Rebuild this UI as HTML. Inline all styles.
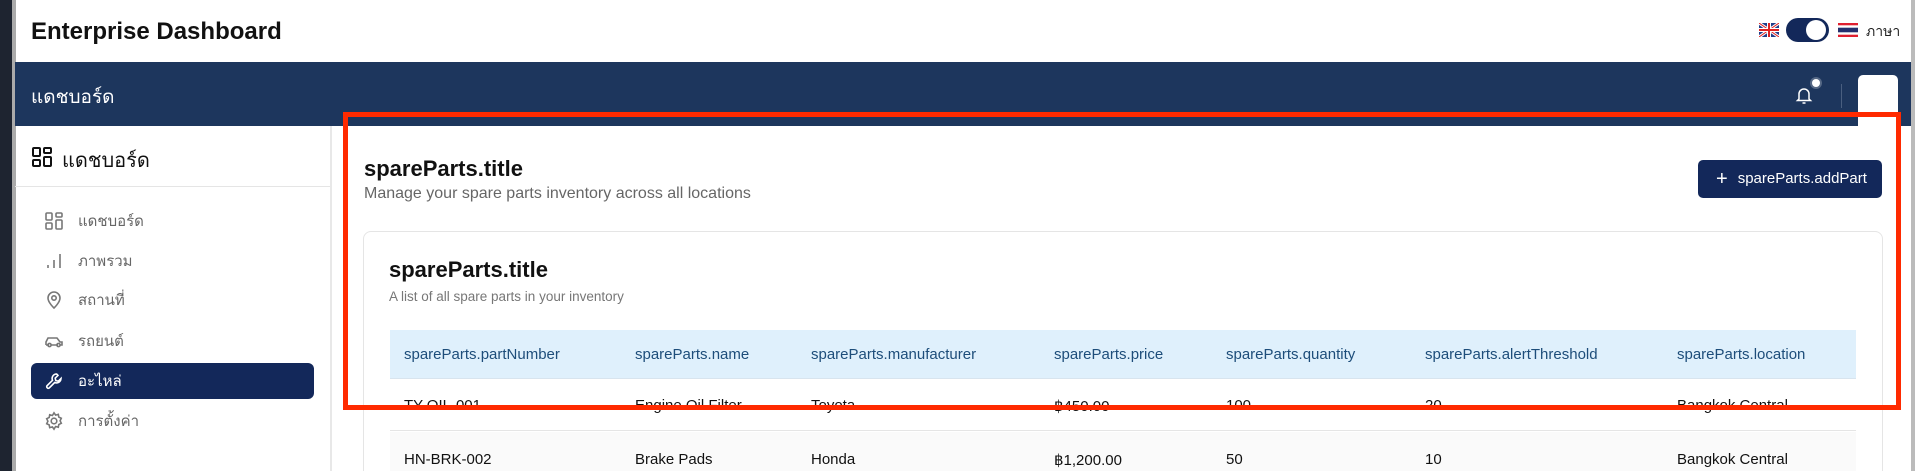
<!DOCTYPE html>
<html><head><meta charset="utf-8"><style>
*{box-sizing:border-box;margin:0;padding:0}
html,body{width:1915px;height:471px;overflow:hidden}
body{background:#fff;font-family:"Liberation Sans","Noto Sans CJK SC",sans-serif;position:relative}
.a{position:absolute}
.th{position:absolute;top:0;height:49px;line-height:49px;font-size:15px;color:#1d4d7a}
.td{position:absolute;font-size:15px;color:#111}
.mi{position:absolute;left:44px;font-size:15px;color:#666;display:flex;align-items:center;gap:14px;height:30px}
.mi svg{width:20px;height:20px;fill:none;stroke:#777;stroke-width:1.6}
</style></head><body>
<div class="a" style="left:0;top:0;width:15px;height:471px;background:#1e2430"></div>
<div class="a" style="left:12px;top:0;width:4px;height:471px;background:#aaa"></div>
<div class="a" style="left:1911px;top:0;width:4px;height:471px;background:#bbb"></div>
<div class="a" style="left:31px;top:18px;font-size:24px;font-weight:bold;color:#111">Enterprise Dashboard</div>
<svg class="a" style="left:1759px;top:23px" width="20" height="14" viewBox="0 0 20 14"><rect width="20" height="14" fill="#1f3d8a"/><path d="M0 0L20 14M20 0L0 14" stroke="#fff" stroke-width="3"/><path d="M0 0L20 14M20 0L0 14" stroke="#d22" stroke-width="1"/><path d="M10 0V14M0 7H20" stroke="#fff" stroke-width="4"/><path d="M10 0V14M0 7H20" stroke="#d22" stroke-width="2"/></svg>
<div class="a" style="left:1786px;top:18px;width:43px;height:24px;border-radius:12px;background:#13285a"><div class="a" style="left:20px;top:2px;width:20px;height:20px;border-radius:50%;background:#fff"></div></div>
<svg class="a" style="left:1838px;top:23px" width="20" height="14" viewBox="0 0 20 14"><rect width="20" height="14" fill="#e02030"/><rect y="2.3" width="20" height="9.4" fill="#fff"/><rect y="4.7" width="20" height="4.6" fill="#24306e"/></svg>
<div class="a" style="left:1866px;top:21px;font-size:14px;color:#222">ภาษา</div>
<div class="a" style="left:15px;top:62px;width:1896px;height:64px;background:#1d365d"></div>
<div class="a" style="left:31px;top:82px;font-size:19px;color:#fff">แดชบอร์ด</div>
<svg class="a" style="left:1795px;top:85px" width="18" height="20" viewBox="0 0 18 20" fill="none" stroke="#fff" stroke-width="1.5"><path d="M4 14V9a5 5 0 0110 0v5l1.5 1.5h-13z"/><path d="M7.5 18h3"/></svg>
<div class="a" style="left:1812px;top:79px;width:8px;height:8px;border-radius:50%;background:#fff;box-shadow:0 0 0 2px rgba(255,255,255,.25)"></div>
<div class="a" style="left:1841px;top:84px;width:1px;height:24px;background:#4a5f80"></div>
<div class="a" style="left:1858px;top:75px;width:40px;height:51px;border-radius:5px 5px 0 0;background:#fff"></div>
<div class="a" style="left:330px;top:126px;width:2px;height:345px;background:#e8e8e8"></div>
<div class="a" style="left:15px;top:186px;width:315px;height:1px;background:#e5e5e5"></div>
<svg class="a" style="left:32px;top:147px" width="20" height="20" viewBox="0 0 20 20" fill="none" stroke="#111" stroke-width="2"><rect x="1" y="1" width="7" height="8" rx="1"/><rect x="12" y="1" width="7" height="5" rx="1"/><rect x="12" y="10" width="7" height="9" rx="1"/><rect x="1" y="13" width="7" height="6" rx="1"/></svg>
<div class="a" style="left:62px;top:144px;font-size:20px;color:#111">แดชบอร์ด</div>
<div class="mi" style="top:206px"><svg viewBox="0 0 20 20"><rect x="2" y="2" width="6" height="7" rx="1"/><rect x="12" y="2" width="6" height="4" rx="1"/><rect x="12" y="9" width="6" height="9" rx="1"/><rect x="2" y="12" width="6" height="6" rx="1"/></svg>แดชบอร์ด</div>
<div class="mi" style="top:246px"><svg viewBox="0 0 20 20"><path d="M4 17v-3M10 17V9M16 17V3"/></svg>ภาพรวม</div>
<div class="mi" style="top:285px"><svg viewBox="0 0 20 20"><path d="M10 18s6-5.5 6-10a6 6 0 00-12 0c0 4.5 6 10 6 10z"/><circle cx="10" cy="8" r="2.2"/></svg>สถานที่</div>
<div class="mi" style="top:326px"><svg viewBox="0 0 20 20"><path d="M2 14V11l2-4h9l3 4h2v3h-2M5 14H2M14 14H7"/><circle cx="5.5" cy="14" r="1.6"/><circle cx="14.5" cy="14" r="1.6"/></svg>รถยนต์</div>
<div class="a" style="left:31px;top:363px;width:283px;height:36px;border-radius:6px;background:#13285a"></div>
<div class="mi" style="top:366px;color:#fff"><svg viewBox="0 0 20 20" style="stroke:#fff"><path d="M12.5 3a4.5 4.5 0 00-4 6.3L3 14.8a1.6 1.6 0 002.2 2.2l5.5-5.5A4.5 4.5 0 0017 7.5l-2.7 2.7-2.5-.6-.6-2.5L14 4.4a4.5 4.5 0 00-1.5-1.4z"/></svg>อะไหล่</div>
<div class="mi" style="top:406px"><svg viewBox="0 0 20 20"><circle cx="10" cy="10" r="2.8"/><path d="M10 1.8l1.6 2.3 2.7-.7.5 2.7 2.5 1.2-1.2 2.5 1.2 2.5-2.5 1.2-.5 2.7-2.7-.7L10 18.2l-1.6-2.3-2.7.7-.5-2.7-2.5-1.2 1.2-2.5-1.2-2.5 2.5-1.2.5-2.7 2.7.7z"/></svg>การตั้งค่า</div>
<div class="a" style="left:364px;top:156px;font-size:22px;font-weight:bold;color:#111">spareParts.title</div>
<div class="a" style="left:364px;top:185px;font-size:16px;color:#666">Manage your spare parts inventory across all locations</div>
<div class="a" style="left:1698px;top:160px;width:184px;height:38px;border-radius:5px;background:#13285a;color:#fff;font-size:15px;line-height:38px;padding-left:18px"><span style="font-size:20px;vertical-align:-2px;margin-right:10px">+</span>spareParts.addPart</div>
<div class="a" style="left:363px;top:231px;width:1520px;height:250px;border:1px solid #e5e5e5;border-radius:8px"></div>
<div class="a" style="left:389px;top:257px;font-size:22px;font-weight:bold;color:#111">spareParts.title</div>
<div class="a" style="left:389px;top:289px;font-size:13.5px;color:#777">A list of all spare parts in your inventory</div>
<div class="a" style="left:390px;top:330px;width:1466px;height:49px;background:#dff0fc;border-bottom:1px solid #d8e4ee">
<div class="th" style="left:14px">spareParts.partNumber</div><div class="th" style="left:245px">spareParts.name</div><div class="th" style="left:421px">spareParts.manufacturer</div><div class="th" style="left:664px">spareParts.price</div><div class="th" style="left:836px">spareParts.quantity</div><div class="th" style="left:1035px">spareParts.alertThreshold</div><div class="th" style="left:1287px">spareParts.location</div></div>
<div class="a" style="left:390px;top:379px;width:1466px;height:52px;border-bottom:1px solid #e5e5e5">
<div class="td" style="left:14px;top:18px">TY-OIL-001</div><div class="td" style="left:245px;top:18px">Engine Oil Filter</div><div class="td" style="left:421px;top:18px">Toyota</div><div class="td" style="left:664px;top:18px">฿450.00</div><div class="td" style="left:836px;top:18px">100</div><div class="td" style="left:1035px;top:18px">20</div><div class="td" style="left:1287px;top:18px">Bangkok Central</div></div>
<div class="a" style="left:390px;top:432px;width:1466px;height:39px;background:#fafafa">
<div class="td" style="left:14px;top:19px">HN-BRK-002</div><div class="td" style="left:245px;top:19px">Brake Pads</div><div class="td" style="left:421px;top:19px">Honda</div><div class="td" style="left:664px;top:19px">฿1,200.00</div><div class="td" style="left:836px;top:19px">50</div><div class="td" style="left:1035px;top:19px">10</div><div class="td" style="left:1287px;top:19px">Bangkok Central</div></div>
<div class="a" style="left:343px;top:112px;width:1558px;height:298px;border:5px solid #ff2a00"></div>
</body></html>
